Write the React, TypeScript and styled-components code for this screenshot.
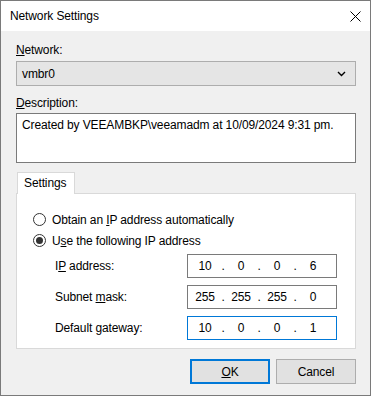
import styled, { createGlobalStyle } from 'styled-components';

const GlobalStyle = createGlobalStyle`
  html, body {
    margin: 0;
    padding: 0;
    background: #ffffff;
  }
  body {
    font-family: "Liberation Sans", Arial, sans-serif;
    font-size: 12px;
    letter-spacing: -0.12px;
    color: #000000;
  }
`;

const Window = styled.div`
  width: 371px;
  height: 396px;
  box-sizing: border-box;
  border: 1px solid #7a7a7a;
  background: #f0f0f0;
  display: flex;
  flex-direction: column;
`;

const TitleBar = styled.div`
  height: 30px;
  background: #ffffff;
  display: flex;
  align-items: center;
  justify-content: space-between;
  padding: 0 8px 0 9px;
`;

const CloseButton = styled.div`
  width: 14px;
  height: 14px;
  display: flex;
  align-items: center;
  justify-content: center;
`;

const Body = styled.div`
  flex: 1;
  display: flex;
  flex-direction: column;
  padding: 12px 14px 0 15px;
`;

const FieldLabel = styled.div`
  line-height: 15px;
  height: 15px;
`;

const Key = styled.span`
  text-decoration: underline;
  text-underline-offset: 1px;
`;

const Combo = styled.div`
  margin-top: 3px;
  height: 25px;
  box-sizing: border-box;
  border: 1px solid #adadad;
  background: #e5e5e5;
  display: flex;
  align-items: center;
  justify-content: space-between;
  padding: 0 9px 0 5px;
`;

const TextArea = styled.div`
  margin-top: 2px;
  height: 50px;
  box-sizing: border-box;
  border: 1px solid #7a7a7a;
  background: #ffffff;
  padding: 4px 5px;
  line-height: 15px;
`;

const Gap = styled.div<{ $h: number }>`
  height: ${(p) => p.$h}px;
  flex-shrink: 0;
`;

const TabStrip = styled.div`
  display: flex;
  padding-left: 1px;
  margin-top: 9px;
`;

const Tab = styled.div`
  width: 58px;
  height: 22px;
  box-sizing: border-box;
  border: 1px solid #d9d9d9;
  border-bottom: none;
  background: #ffffff;
  padding: 3px 0 0 6px;
  position: relative;
  z-index: 1;
  margin-bottom: -1px;
`;

const TabPanel = styled.div`
  height: 156px;
  box-sizing: border-box;
  border: 1px solid #d9d9d9;
  background: #ffffff;
  padding: 19px 0 0 16px;
  display: flex;
  flex-direction: column;
`;

const RadioRow = styled.div`
  display: flex;
  align-items: center;
  gap: 6px;
  height: 13px;
  margin-bottom: 8px;
`;

const RadioCircle = styled.span<{ $checked?: boolean }>`
  width: 13px;
  height: 13px;
  box-sizing: border-box;
  border-radius: 50%;
  border: 1px solid #333333;
  background: #ffffff;
  display: flex;
  align-items: center;
  justify-content: center;
  &::after {
    content: '';
    width: 7px;
    height: 7px;
    border-radius: 50%;
    background: ${(p) => (p.$checked ? '#333333' : 'transparent')};
  }
`;

const IpGrid = styled.div`
  display: grid;
  grid-template-columns: 132px 150px;
  row-gap: 7px;
  padding-left: 22px;
  margin-top: -1px;
  align-items: center;
`;

const IpBox = styled.div<{ $focused?: boolean }>`
  height: 24px;
  box-sizing: border-box;
  border: 1px solid ${(p) => (p.$focused ? '#0078d7' : '#7a7a7a')};
  background: #ffffff;
  display: flex;
  align-items: center;
  padding-left: 2px;
`;

const Octet = styled.span`
  width: 30px;
  text-align: center;
`;

const Dot = styled.span`
  width: 6px;
  text-align: center;
`;

const ButtonRow = styled.div`
  display: flex;
  justify-content: flex-end;
  gap: 6px;
  margin-top: 10px;
`;

const Button = styled.div<{ $default?: boolean }>`
  width: 80px;
  height: 25px;
  box-sizing: border-box;
  border: ${(p) => (p.$default ? '2px solid #0078d7' : '1px solid #adadad')};
  background: #e1e1e1;
  display: flex;
  align-items: center;
  justify-content: center;
`;

const IpField = ({ parts, focused }: { parts: string[]; focused?: boolean }) => (
  <IpBox $focused={focused}>
    {parts.map((p, i) => (
      <span key={i} style={{ display: 'contents' }}>
        {i > 0 && <Dot>.</Dot>}
        <Octet>{p}</Octet>
      </span>
    ))}
  </IpBox>
);

const App = () => {
  return (
    <>
      <GlobalStyle />
      <Window>
        <TitleBar>
          <span>Network Settings</span>
          <CloseButton>
            <svg width="11" height="11" viewBox="0 0 11 11">
              <path d="M0.5 0.5 L10.5 10.5 M10.5 0.5 L0.5 10.5" stroke="#000" strokeWidth="1" />
            </svg>
          </CloseButton>
        </TitleBar>
        <Body>
          <FieldLabel>
            <Key>N</Key>etwork:
          </FieldLabel>
          <Combo>
            <span>vmbr0</span>
            <svg width="9" height="6" viewBox="0 0 9 6">
              <path d="M1 1 L4.5 4.5 L8 1" stroke="#000" strokeWidth="1.4" fill="none" />
            </svg>
          </Combo>
          <Gap $h={10} />
          <FieldLabel>
            <Key>D</Key>escription:
          </FieldLabel>
          <TextArea>Created by VEEAMBKP\veeamadm at 10/09/2024 9:31 pm.</TextArea>
          <TabStrip>
            <Tab>Settings</Tab>
          </TabStrip>
          <TabPanel>
            <RadioRow>
              <RadioCircle />
              <span>
                Obtain an <Key>I</Key>P address automatically
              </span>
            </RadioRow>
            <RadioRow>
              <RadioCircle $checked />
              <span>
                U<Key>s</Key>e the following IP address
              </span>
            </RadioRow>
            <IpGrid>
              <span>
                I<Key>P</Key> address:
              </span>
              <IpField parts={['10', '0', '0', '6']} />
              <span>
                Subnet <Key>m</Key>ask:
              </span>
              <IpField parts={['255', '255', '255', '0']} />
              <span>
                Default <Key>g</Key>ateway:
              </span>
              <IpField parts={['10', '0', '0', '1']} focused />
            </IpGrid>
          </TabPanel>
          <ButtonRow>
            <Button $default>
              <span>
                <Key>O</Key>K
              </span>
            </Button>
            <Button>Cancel</Button>
          </ButtonRow>
        </Body>
      </Window>
    </>
  );
};

export default App;
